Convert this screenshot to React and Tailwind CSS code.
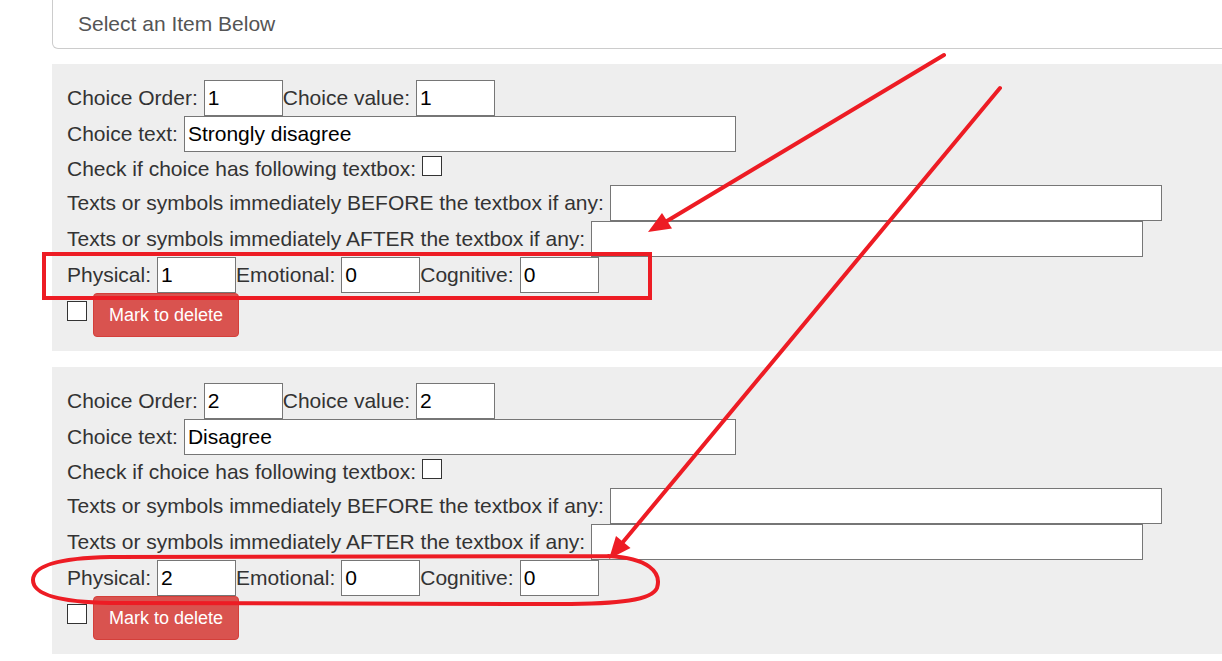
import React from "react";

const font = { fontFamily: '"Liberation Sans", Arial, sans-serif' };

function Inp({ w = "w-[79px]", v = "" }) {
  return (
    <div
      className={`${w} h-[36px] shrink-0 border border-[#767676] bg-white pl-[3px] flex items-center text-[21px] text-black`}
    >
      {v}
    </div>
  );
}

function Box({ cls = "" }) {
  return <div className={`w-[20px] h-[20px] border border-[#333] bg-white shrink-0 ${cls}`} />;
}

function Panel({ order, text, phys }) {
  return (
    <div className="w-[1200px] bg-[#eeeeee] pl-[15px] pt-[16px] pb-[14px] text-[21px] text-[#333]">
      <div className="flex items-center h-[36px]">
        <span className="mr-[6px]">Choice Order:</span>
        <Inp v={order} />
        <span className="mr-[6px]">Choice value:</span>
        <Inp v={order} />
      </div>
      <div className="flex items-center h-[36px]">
        <span className="mr-[6px]">Choice text:</span>
        <Inp w="w-[552px]" v={text} />
      </div>
      <div className="flex items-center h-[33px]">
        <span className="mr-[6px]">Check if choice has following textbox:</span>
        <Box cls="-mt-[5px]" />
      </div>
      <div className="flex items-center h-[36px]">
        <span className="mr-[6px]">Texts or symbols immediately BEFORE the textbox if any:</span>
        <Inp w="w-[552px]" />
      </div>
      <div className="flex items-center h-[36px]">
        <span className="mr-[6px]">Texts or symbols immediately AFTER the textbox if any:</span>
        <Inp w="w-[552px]" />
      </div>
      <div className="flex items-center h-[36px]">
        <span className="mr-[6px]">Physical:</span>
        <Inp v={phys} />
        <span className="mr-[6px]">Emotional:</span>
        <Inp v="0" />
        <span className="mr-[6px]">Cognitive:</span>
        <Inp v="0" />
      </div>
      <div className="flex items-start h-[44px]">
        <Box cls="mt-[8px] mr-[6px]" />
        <button className="h-[44px] px-[15px] rounded-[4px] bg-[#d9534f] border border-[#d43f3a] text-white text-[18px]">
          Mark to delete
        </button>
      </div>
    </div>
  );
}

export default function App() {
  return (
    <div className="relative w-[1222px] h-[661px] overflow-hidden bg-white" style={font}>
      <div className="pl-[52px] flex flex-col">
        <div className="w-[1200px] h-[49px] border border-t-0 border-[#cccccc] rounded-bl-[6px] flex items-center pl-[25px] text-[21px] text-[#555]">
          Select an Item Below
        </div>
        <div className="mt-[15px]">
          <Panel order="1" text="Strongly disagree" phys="1" />
        </div>
        <div className="mt-[16px]">
          <Panel order="2" text="Disagree" phys="2" />
        </div>
      </div>
      <svg className="absolute inset-0 pointer-events-none" width="1222" height="661">
        <g stroke="#ed1c24" strokeWidth="4" fill="none" strokeLinecap="round" strokeLinejoin="round">
          <rect x="44" y="254" width="606" height="44" strokeLinecap="butt" strokeLinejoin="miter" />
          <line x1="944" y1="55" x2="667" y2="221" />
          <line x1="1000" y1="88" x2="623" y2="542" />
          <path d="M 608 556 C 648 558, 662 572, 657 588 C 652 600, 620 604, 560 604 L 110 603 C 58 602, 33 594, 33 580 C 33 566, 58 558, 110 557 L 608 556" />
        </g>
        <polygon points="648,232 672,228.5 662,213" fill="#ed1c24" />
        <polygon points="609,559 630.5,548 616,536" fill="#ed1c24" />
      </svg>
    </div>
  );
}
